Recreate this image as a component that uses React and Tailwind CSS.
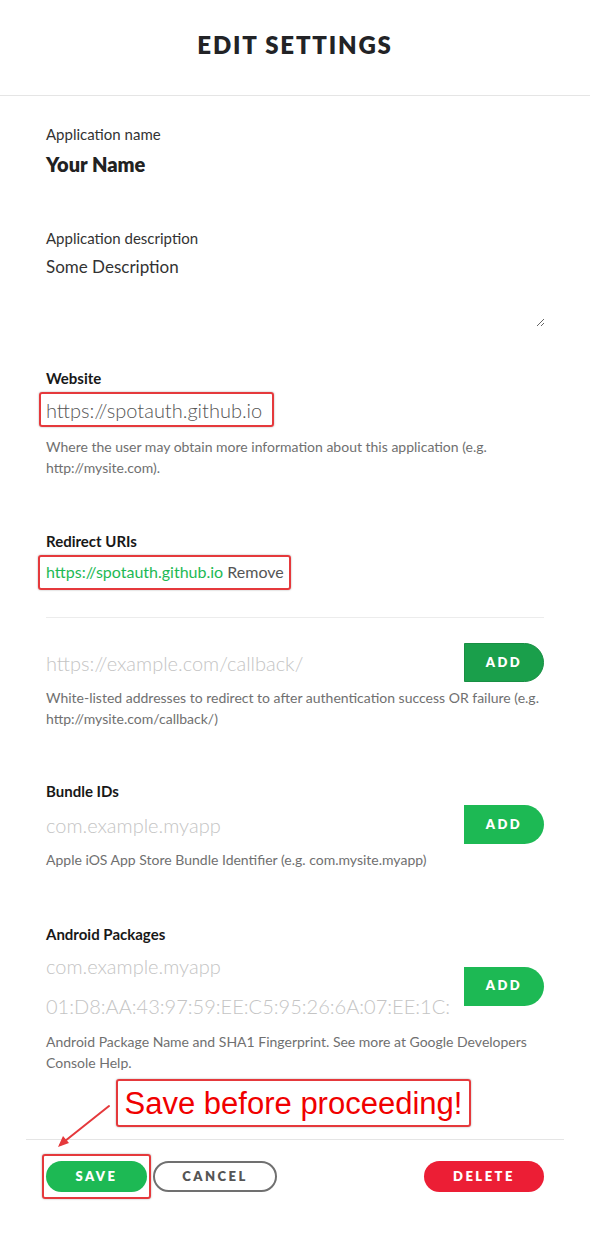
import React from "react";

const body = { fontFamily: "Lato, 'Noto Sans', sans-serif" };

function AddButton({ dark }) {
  return (
    <button
      className={
        "w-[80px] h-[39px] shrink-0 rounded-r-full text-white text-[13px] font-extrabold tracking-[2.5px] " +
        (dark ? "bg-[#1a9f4b] border border-[#188f43]" : "bg-[#1db954]")
      }
    >
      ADD
    </button>
  );
}

function Annot({ className }) {
  return (
    <div
      className={
        "absolute border-2 border-[#e5393c] rounded-[3px] shadow-[0_0_2px_rgba(0,0,0,0.35)] pointer-events-none " +
        className
      }
    />
  );
}

export default function App() {
  return (
    <div className="relative w-[590px] h-[1258px] bg-white text-[#222326]" style={body}>
      <div className="h-[96px] pb-[6px] flex items-center justify-center border-b border-[#e5e5e5]">
        <h1 className="text-[24px] font-extrabold tracking-[1.8px] text-[#222326]">EDIT SETTINGS</h1>
      </div>

      <div className="px-[46px]">
        <div className="mt-[28px] text-[15px] leading-[20px] text-[#333]">Application name</div>
        <div className="mt-[7px] text-[20px] leading-[26px] font-extrabold text-[#222]">Your Name</div>

        <div className="mt-[51px] text-[15px] leading-[20px] text-[#333]">Application description</div>
        <textarea
          className="mt-[7px] block w-[499px] h-[72px] p-0 text-[17px] leading-[24px] text-[#333] outline-none border-0 bg-transparent"
          style={body}
          defaultValue="Some Description"
        />

        <div className="mt-[41px] text-[15px] leading-[20px] font-bold text-[#181818]">Website</div>
        <div className="mt-[8px] relative h-[28px] text-[20px] leading-[28px] text-[#555] font-light">
          https://spotauth.github.io
          <Annot className="-left-[7px] -top-[4px] w-[235px] h-[35px]" />
        </div>
        <p className="mt-[12px] text-[14px] leading-[21px] text-[#707070]">
          Where the user may obtain more information about this application (e.g. http://mysite.com).
        </p>

        <div className="mt-[53px] text-[15px] leading-[20px] font-bold text-[#181818]">Redirect URIs</div>
        <div className="mt-[9px] relative h-[24px] text-[16px] leading-[24px]">
          <span className="text-[#1db954]">https://spotauth.github.io</span>{" "}
          <span className="text-[#555]">Remove</span>
          <Annot className="-left-[8px] -top-[5px] w-[253px] h-[35px]" />
        </div>

        <div className="mt-[33px] border-t border-[#ececec]" />

        <div className="mt-[25px] flex items-center justify-between">
          <div className="text-[20px] font-light text-[#c4c4c4]">https://example.com/callback/</div>
          <AddButton dark />
        </div>
        <p className="mt-[5px] text-[14px] leading-[21px] text-[#707070]">
          White-listed addresses to redirect to after authentication success OR failure (e.g. http://mysite.com/callback/)
        </p>

        <div className="mt-[52px] text-[15px] leading-[20px] font-bold text-[#181818]">Bundle IDs</div>
        <div className="mt-[4px] flex items-center justify-between">
          <div className="text-[20px] font-light text-[#c4c4c4]">com.example.myapp</div>
          <AddButton />
        </div>
        <p className="mt-[5px] text-[14px] leading-[21px] text-[#707070]">
          Apple iOS App Store Bundle Identifier (e.g. com.mysite.myapp)
        </p>

        <div className="mt-[54px] text-[15px] leading-[20px] font-bold text-[#181818]">Android Packages</div>
        <div className="mt-[2px] flex items-center justify-between">
          <div className="flex flex-col">
            <div className="h-[40px] flex items-center text-[20px] font-light text-[#c4c4c4]">com.example.myapp</div>
            <div className="h-[40px] flex items-center text-[20px] font-light text-[#c4c4c4]">
              01:D8:AA:43:97:59:EE:C5:95:26:6A:07:EE:1C:
            </div>
          </div>
          <AddButton />
        </div>
        <p className="mt-[5px] text-[14px] leading-[21px] text-[#707070]">
          Android Package Name and SHA1 Fingerprint. See more at Google Developers Console Help.
        </p>
      </div>

      <div className="mt-[66px] mx-[26px] border-t border-[#e5e5e5]" />

      <div className="mt-[21px] px-[46px] flex items-center justify-between">
        <div className="flex items-center gap-[6px]">
          <div className="relative">
            <button className="w-[101px] h-[31px] rounded-full bg-[#1db954] text-white text-[13px] font-extrabold tracking-[2.5px]">
              SAVE
            </button>
            <Annot className="-left-[4px] -top-[7px] w-[109px] h-[45px]" />
          </div>
          <button className="w-[124px] h-[31px] rounded-full border-2 border-[#707070] text-[#555] text-[13px] font-extrabold tracking-[2.5px]">
            CANCEL
          </button>
        </div>
        <button className="w-[120px] h-[31px] rounded-full bg-[#ec1e35] text-white text-[13px] font-extrabold tracking-[2.5px]">
          DELETE
        </button>
      </div>

      <div
        className="absolute left-[116px] top-[1079px] w-[355px] h-[48px] border-2 border-[#e5393c] rounded-[3px] shadow-[0_0_2px_rgba(0,0,0,0.35)] flex items-center justify-center text-[31px] leading-none text-[#f00000]"
        style={{ fontFamily: "'Liberation Sans', Arial, sans-serif" }}
      >
        Save before proceeding!
      </div>

      <svg className="absolute left-[50px] top-[1100px]" width="66" height="52" viewBox="0 0 66 52">
        <line x1="59" y1="6" x2="10" y2="45" stroke="#e5393c" strokeWidth="2" strokeLinecap="round" />
        <polygon points="8,47 13,36 19,43" fill="#e5393c" />
      </svg>
    </div>
  );
}
